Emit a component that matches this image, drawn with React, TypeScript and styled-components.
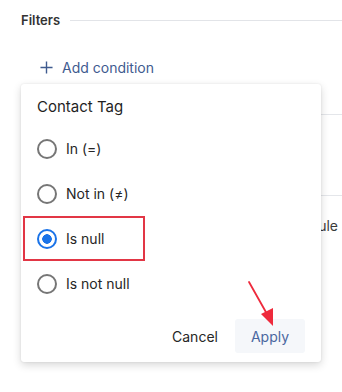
import styled, { createGlobalStyle } from "styled-components";

const GlobalStyle = createGlobalStyle`
  body {
    margin: 0;
    background: #ffffff;
    font-family: Inter, "Liberation Sans", sans-serif;
    -webkit-font-smoothing: antialiased;
  }
`;

const options = [
  { label: "In (=)", checked: false },
  { label: "Not in (≠)", checked: false },
  { label: "Is null", checked: true, highlighted: true },
  { label: "Is not null", checked: false },
];

export default function App() {
  return (
    <>
      <GlobalStyle />
      <Page>
        <SectionHeader>
          <SectionTitle>Filters</SectionTitle>
          <SectionRule />
        </SectionHeader>
        <AddCondition>
          <PlusIcon viewBox="0 0 14 14">
            <path d="M7 0.5v13M0.5 7h13" stroke="currentColor" strokeWidth="1.5" fill="none" />
          </PlusIcon>
          Add condition
        </AddCondition>

        <BackList>
          <BackRow $height={32} $border />
          <BackRow $height={80} $border />
          <BackRow $height={58}>
            <BackText>Schedule</BackText>
          </BackRow>
        </BackList>

        <Popover>
          <PopoverTitle>Contact Tag</PopoverTitle>
          <OptionList>
            {options.map((o) => (
              <Option key={o.label} $highlighted={!!o.highlighted}>
                <Radio $checked={o.checked} />
                <OptionLabel>{o.label}</OptionLabel>
              </Option>
            ))}
          </OptionList>
          <Footer>
            <FooterButton>Cancel</FooterButton>
            <FooterButton $primary>Apply</FooterButton>
          </Footer>
        </Popover>

        <Arrow viewBox="0 0 50 60">
          <line x1="9" y1="6" x2="27" y2="38" stroke="#ee2a3c" strokeWidth="1.8" strokeLinecap="round" />
          <polygon points="21,38 33,32 33,50" fill="#ee2a3c" />
        </Arrow>
      </Page>
    </>
  );
}

const Page = styled.div`
  position: relative;
  width: 342px;
  height: 392px;
  overflow: hidden;
  background: #ffffff;
`;

const SectionHeader = styled.div`
  display: flex;
  align-items: center;
  gap: 10px;
  height: 20px;
  padding: 10px 0 0 21px;
`;

const SectionTitle = styled.div`
  font-size: 13px;
  font-weight: 600;
  color: #333333;
`;

const SectionRule = styled.div`
  flex: 1;
  height: 1px;
  background: #e2e4e8;
`;

const AddCondition = styled.div`
  display: flex;
  align-items: center;
  gap: 9px;
  height: 20px;
  margin: 27px 0 0 40px;
  font-size: 14px;
  color: #3f5b8f;
`;

const PlusIcon = styled.svg`
  width: 13px;
  height: 13px;
`;

const BackList = styled.div`
  display: flex;
  flex-direction: column;
  margin: 0 0 0 60px;
  padding-top: 5px;
`;

const BackRow = styled.div<{ $height: number; $border?: boolean }>`
  display: flex;
  align-items: center;
  justify-content: flex-end;
  height: ${(p) => p.$height}px;
  border-bottom: 1px solid ${(p) => (p.$border ? "#e4e6ea" : "transparent")};
  padding-right: 4px;
`;

const BackText = styled.span`
  font-size: 14px;
  color: #3a3a3a;
`;

const Popover = styled.div`
  position: absolute;
  top: 84px;
  left: 21px;
  width: 300px;
  height: 278px;
  box-sizing: border-box;
  background: #ffffff;
  border-radius: 3px;
  box-shadow: 0 3px 9px rgba(0, 0, 0, 0.16), 0 0 2px rgba(0, 0, 0, 0.1);
  display: flex;
  flex-direction: column;
`;

const PopoverTitle = styled.div`
  padding: 13px 0 0 16px;
  line-height: 20px;
  font-size: 15px;
  color: #1f1f1f;
`;

const OptionList = styled.div`
  display: flex;
  flex-direction: column;
  margin-top: 9px;
`;

const Option = styled.div<{ $highlighted: boolean }>`
  display: flex;
  align-items: center;
  gap: 9px;
  box-sizing: border-box;
  height: 45px;
  width: ${(p) => (p.$highlighted ? "122px" : "auto")};
  margin-left: 2px;
  padding-left: 12px;
  border: 2px solid ${(p) => (p.$highlighted ? "#e23645" : "transparent")};
`;

const Radio = styled.span<{ $checked: boolean }>`
  box-sizing: border-box;
  width: 20px;
  height: 20px;
  border-radius: 50%;
  border: 2px solid ${(p) => (p.$checked ? "#1a73e8" : "#767676")};
  background: ${(p) =>
    p.$checked ? "radial-gradient(circle, #1a73e8 0 4.5px, #ffffff 5px)" : "#ffffff"};
`;

const OptionLabel = styled.span`
  font-size: 14px;
  color: #262626;
`;

const Footer = styled.div`
  display: flex;
  justify-content: flex-end;
  gap: 5px;
  margin-top: auto;
  padding: 0 16px 9px 0;
`;

const FooterButton = styled.button<{ $primary?: boolean }>`
  width: 70px;
  height: 34px;
  border: none;
  border-radius: 3px;
  font-family: inherit;
  font-size: 14px;
  color: ${(p) => (p.$primary ? "#4a67a0" : "#262626")};
  background: ${(p) => (p.$primary ? "#f5f7fa" : "transparent")};
`;

const Arrow = styled.svg`
  position: absolute;
  left: 240px;
  top: 276px;
  width: 50px;
  height: 60px;
`;
